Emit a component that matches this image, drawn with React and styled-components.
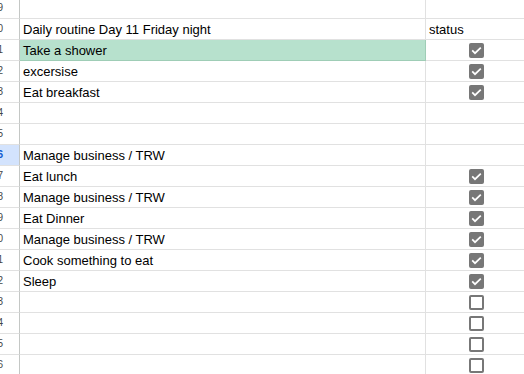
import styled, { createGlobalStyle } from "styled-components";

const GlobalStyle = createGlobalStyle`
  html, body {
    margin: 0;
    padding: 0;
    background: #fff;
    overflow: hidden;
  }
  body {
    font-family: "Liberation Sans", Arial, sans-serif;
  }
`;

const Sheet = styled.div`
  display: grid;
  grid-template-columns: 20px 406px 100px;
  grid-auto-rows: 21px;
  margin-top: -2px;
  width: 526px;
`;

const RowHeader = styled.div`
  display: flex;
  justify-content: flex-end;
  align-items: center;
  padding-right: 16px;
  overflow: hidden;
  border-right: 1px solid #c4c7c5;
  border-bottom: 1px solid #e1e1e1;
  background: ${p => (p.$selected ? "#d3e3fd" : "#fff")};
  color: ${p => (p.$selected ? "#0b57d0" : "#444746")};
  font-size: 10px;
  font-weight: ${p => (p.$selected ? 700 : 400)};
`;

const Num = styled.span`
  flex-shrink: 0;
  line-height: 12px;
`;

const Cell = styled.div`
  display: flex;
  align-items: flex-end;
  padding: 0 3px 1px;
  font-size: 13px;
  line-height: 16px;
  color: #000;
  white-space: nowrap;
  overflow: hidden;
  background: ${p => (p.$fill ? "#b7e1cd" : "#fff")};
  border-right: 1px solid ${p => (p.$fill ? "#9fcdb6" : "#e1e1e1")};
  border-bottom: 1px solid ${p => (p.$fill ? "#9fcdb6" : "#e1e1e1")};
`;

const StatusCell = styled.div`
  display: flex;
  align-items: center;
  justify-content: center;
  border-bottom: 1px solid #e1e1e1;
`;

const Box = styled.div`
  width: 15px;
  height: 15px;
  box-sizing: border-box;
  border-radius: 2px;
  background: ${p => (p.$checked ? "#777" : "#fff")};
  border: ${p => (p.$checked ? "none" : "2px solid #777")};
  display: flex;
  align-items: center;
  justify-content: center;
`;

const rows = [
  { n: 19, text: "" },
  { n: 20, text: "Daily routine Day 11 Friday night", status: "status" },
  { n: 21, text: "Take a shower", fill: true, box: true },
  { n: 22, text: "excersise", box: true },
  { n: 23, text: "Eat breakfast", box: true },
  { n: 24, text: "" },
  { n: 25, text: "" },
  { n: 26, text: "Manage business / TRW", selected: true },
  { n: 27, text: "Eat lunch", box: true },
  { n: 28, text: "Manage business / TRW", box: true },
  { n: 29, text: "Eat Dinner", box: true },
  { n: 30, text: "Manage business / TRW", box: true },
  { n: 31, text: "Cook something to eat", box: true },
  { n: 32, text: "Sleep", box: true },
  { n: 33, text: "", empty: true },
  { n: 34, text: "", empty: true },
  { n: 35, text: "", empty: true },
  { n: 36, text: "", empty: true },
];

const Check = ({ checked }) => (
  <Box $checked={checked}>
    {checked && (
      <svg width="11" height="9" viewBox="0 0 11 9">
        <path d="M1.2 4.4 L4 7.2 L9.8 1.6" fill="none" stroke="#fff" strokeWidth="1.7" />
      </svg>
    )}
  </Box>
);

const App = () => (
  <>
    <GlobalStyle />
    <Sheet>
      {rows.map(r => [
        <RowHeader key={`h${r.n}`} $selected={r.selected}>
          <Num>{r.n}</Num>
        </RowHeader>,
        <Cell key={`a${r.n}`} $fill={r.fill}>{r.text}</Cell>,
        r.status ? (
          <Cell key={`b${r.n}`}>{r.status}</Cell>
        ) : (
          <StatusCell key={`b${r.n}`}>
            {r.box && <Check checked />}
            {r.empty && <Check />}
          </StatusCell>
        ),
      ])}
    </Sheet>
  </>
);

export default App;
